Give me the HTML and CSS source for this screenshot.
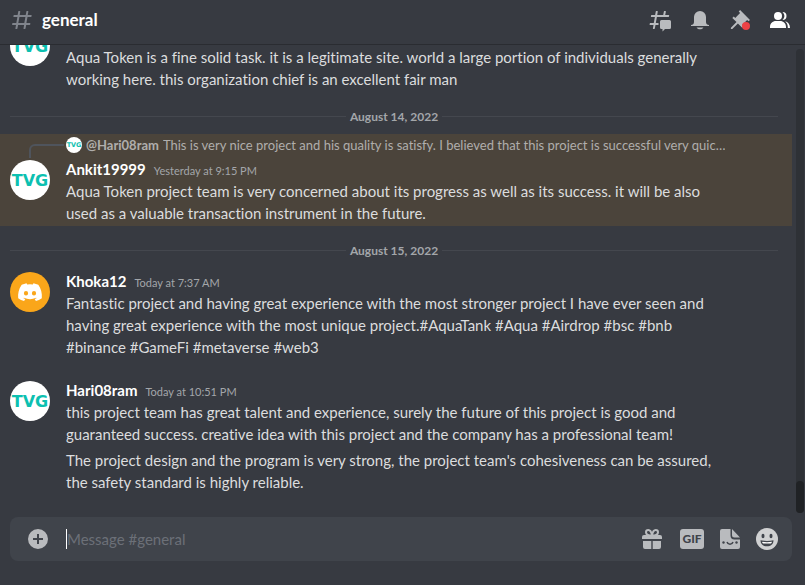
FILE: index.html
```html
<!DOCTYPE html>
<html lang="en">
<head>
<meta charset="UTF-8">
<meta name="viewport" content="width=device-width, initial-scale=1.0">
<link rel="stylesheet" href="styles.css">
<title>general</title>
</head>
<body>

<svg class="sprite" aria-hidden="true">
<symbol id="tvg" viewBox="0 0 40 40">
<circle cx="20" cy="20" r="20" fill="#fff"/>
<text class="tvgText" x="20" y="26" text-anchor="middle">TVG</text>
</symbol>
</svg>

<header class="topBar">
<svg class="icon hash" viewBox="0 0 24 24"><path fill="currentColor" d="M5.9 21c-.3 0-.5-.3-.5-.6L6 17H2.600c-.3 0-.5-.3-.5-.6l.2-1c0-.2.300-.4.500-.4h3.500l1.100-6H3.900c-.3 0-.5-.3-.5-.6l.2-1c0-.2.300-.4.500-.4h3.500l.7-3.600c0-.2.200-.4.500-.4h1c.3 0 .5.300.5.600L9.700 7h6l.7-3.600c0-.2.200-.4.500-.4h1c.3 0 .5.300.5.600L17.700 7h3.500c.3 0 .5.300.5.600l-.2 1c0 .2-.3.400-.5.400h-3.500l-1.100 6h3.500c.3 0 .5.300.5.600l-.2 1c0 .2-.3.400-.5.400h-3.500l-.7 3.600c0 .2-.2.400-.5.400h-1c-.3 0-.5-.3-.5-.6l.6-3.400h-6l-.7 3.600c0 .2-.2.400-.5.400zM9.400 9l-1.100 6h6l1.100-6z"/></svg>
<h1 class="channelName">general</h1>
<nav class="tools">
<button class="toolBtn" aria-label="Threads">
<svg class="icon" viewBox="0 0 24 24" fill="currentColor"><path d="M5.400 21c-.3 0-.5-.3-.5-.6L5.500 17H2.100c-.3 0-.5-.3-.5-.6l.2-1c0-.2.300-.4.500-.4h3.500l1.100-6H3.400c-.3 0-.5-.3-.5-.6l.2-1c0-.2.300-.4.500-.4h3.500l.7-3.600c0-.2.200-.4.500-.4h1c.3 0 .5.300.5.600L9.200 7h6l.7-3.600c0-.2.200-.4.500-.4h1c.3 0 .5.300.5.600L17.200 7h3.500c.3 0 .5.300.5.600l-.2 1c0 .2-.3.400-.5.400H8.900l-1.100 6h2.700v2H7.500l-.7 3.600c0 .2-.2.400-.5.400z"/><path d="M13.500 12h8a1.500 1.500 0 0 1 1.500 1.500v6a1.500 1.500 0 0 1-1.500 1.500h-4.500l-2.500 2.500V21h-1a1.500 1.500 0 0 1-1.500-1.500v-6a1.500 1.500 0 0 1 1.500-1.500z"/></svg>
</button>
<button class="toolBtn" aria-label="Notifications">
<svg class="icon" viewBox="0 0 24 24" fill="currentColor"><path d="M18 9v5c0 1.700 1.300 3 3 3v1H3v-1c1.700 0 3-1.300 3-3V9a6 6 0 0 1 12 0zM8.600 19.500h6.800c-.5 1-1.700 1.800-3.400 1.800s-2.900-.8-3.400-1.800z"/></svg>
</button>
<button class="toolBtn" aria-label="Pinned messages">
<svg class="icon" viewBox="0 0 24 24" fill="currentColor"><path d="M22 12l-9.900-9.900-1.400 1.400 1.400 1.400-4.900 5-1.400-1.400-1.500 1.400 4.200 4.200L2.900 19.700v1.400h1.400l5.600-5.600 4.300 4.200 1.400-1.400-1.400-1.400 4.900-5 1.400 1.400z"/><circle class="dot" cx="18" cy="18" r="4"/></svg>
</button>
<button class="toolBtn active" aria-label="Member list">
<svg class="icon" viewBox="0 0 24 24" fill="currentColor"><circle cx="10" cy="8" r="4"/><path d="M14.500 4a4 4 0 0 1 0 8c1.300-1.200 1.900-2.500 1.900-4s-.6-2.800-1.900-4zM2 20v-1c0-3.500 2.500-6 6-6h4c3.500 0 6 2.500 6 6v1zM17 13.200c3 .8 5 3 5 6.800h-2.200v-1c0-2.300-.9-4.300-2.800-5.800z"/></svg>
</button>
</nav>
</header>

<main class="chat">
<div class="messages">

<article class="message">
<svg class="avatar"><use href="#tvg"/></svg>
<div class="body">
<div class="meta"></div>
<p class="text">Aqua Token is a fine solid task. it is a legitimate site. world a large portion of individuals generally<br>working here. this organization chief is an excellent fair man</p>
</div>
</article>

<div class="divider">August 14, 2022</div>

<article class="message mentioned">
<div class="reply">
<svg class="miniAvatar"><use href="#tvg"/></svg>
<b class="replyUser">@Hari08ram</b>
<span class="replyText">This is very nice project and his quality is satisfy. I believed that this project is successful very quic…</span>
</div>
<svg class="avatar"><use href="#tvg"/></svg>
<div class="body">
<div class="meta"><b class="user">Ankit19999</b><time class="time">Yesterday at 9:15 PM</time></div>
<p class="text">Aqua Token project team is very concerned about its progress as well as its success. it will be also<br>used as a valuable transaction instrument in the future.</p>
</div>
</article>

<div class="divider">August 15, 2022</div>

<article class="message">
<svg class="avatar" viewBox="0 0 40 40"><circle cx="20" cy="20" r="20" fill="#faa61a"/><path fill="#fff" fill-rule="evenodd" d="M28.300 12.800A19 19 0 0 0 23.500 11.200l-.7 1.300a18 18 0 0 0-5.600 0l-.7-1.300a19 19 0 0 0-4.800 1.600C8.600 17.300 7.800 21.800 8.200 26.200a19 19 0 0 0 5.900 2.900l1.200-2-1.900-.9.500-.4a14 14 0 0 0 12.200 0l.5.400-1.900.9 1.200 2a19 19 0 0 0 5.900-2.900c.5-5.100-.8-9.500-3.500-13.400zM16 23.600a2.100 2.300 0 1 1 0-4.600 2.100 2.300 0 0 1 0 4.600zm8 0a2.100 2.300 0 1 1 0-4.600 2.100 2.300 0 0 1 0 4.600z"/></svg>
<div class="body">
<div class="meta"><b class="user">Khoka12</b><time class="time">Today at 7:37 AM</time></div>
<p class="text">Fantastic project and having great experience with the most stronger project I have ever seen and<br>having great experience with the most unique project.#AquaTank #Aqua #Airdrop #bsc #bnb<br>#binance #GameFi #metaverse #web3</p>
</div>
</article>

<article class="message spaced">
<svg class="avatar"><use href="#tvg"/></svg>
<div class="body">
<div class="meta"><b class="user">Hari08ram</b><time class="time">Today at 10:51 PM</time></div>
<p class="text">this project team has great talent and experience, surely the future of this project is good and<br>guaranteed success. creative idea with this project and the company has a professional team!</p>
</div>
</article>

<article class="message">
<div class="body">
<p class="text">The project design and the program is very strong, the project team's cohesiveness can be assured,<br>the safety standard is highly reliable.</p>
</div>
</article>

</div>
<div class="track"><div class="thumb"></div></div>
</main>

<form class="composer">
<button type="button" class="addBtn" aria-label="Add attachment">
<svg class="icon" viewBox="0 0 24 24"><path fill="currentColor" fill-rule="evenodd" d="M12 2a10 10 0 1 0 0 20 10 10 0 0 0 0-20zm5 11h-4v4h-2v-4H7v-2h4V7h2v4h4z"/></svg>
</button>
<input class="msgInput" type="text" aria-label="Message #general" placeholder="Message #general">
<button type="button" class="formBtn" aria-label="Send a gift">
<svg class="icon" viewBox="0 0 24 24"><path fill="currentColor" d="M3 14h8.300v8H5a2 2 0 0 1-2-2zM12.700 14H21v6a2 2 0 0 1-2 2h-6.300zM4 8h16a2 2 0 0 1 2 2v2H2v-2a2 2 0 0 1 2-2z"/><path fill="none" stroke="currentColor" stroke-width="2" d="M12 8.500C9.500 8.500 6 8 6 5.200 6 3.900 7 3 8.300 3 10.500 3 11.500 5.500 12 8.500c.5-3 1.500-5.500 3.700-5.500C17 3 18 3.900 18 5.200c0 2.800-3.500 3.300-6 3.300z"/></svg>
</button>
<button type="button" class="gifBtn">GIF</button>
<button type="button" class="formBtn" aria-label="Open sticker picker">
<svg class="icon" viewBox="0 0 24 24"><path fill="currentColor" d="M4 2h8.500v6.500a4 4 0 0 0 4 4H22V20a2 2 0 0 1-2 2H4a2 2 0 0 1-2-2V4a2 2 0 0 1 2-2zM14 2l8 8.500h-5.500A2.500 2.500 0 0 1 14 8z"/><g fill="#40444b"><circle cx="5.500" cy="15.500" r="1.200"/><circle cx="18.500" cy="15.500" r="1.200"/></g><path fill="none" stroke="#40444b" stroke-width="1.500" d="M9 15c.5 1.500 1.500 2.200 3 2.200s2.500-.7 3-2.200"/></svg>
</button>
<button type="button" class="formBtn emoji" aria-label="Select emoji">
<svg class="icon" viewBox="0 0 24 24"><circle cx="12" cy="12" r="11" fill="currentColor"/><g fill="#40444b"><ellipse cx="8" cy="9" rx="1.500" ry="2.200"/><ellipse cx="16" cy="9" rx="1.500" ry="2.200"/><path d="M5.500 13.300c4 .9 9 .9 13 0 0 4-2.800 6-6.500 6s-6.500-2-6.500-6z"/></g><path fill="#fff" d="M7 14.700c3 .6 7 .6 10 0-.2 1-.7 1.600-1.200 1.900H8.200c-.5-.3-1-.9-1.200-1.900z"/></svg>
</button>
</form>

</body>
</html>
```
FILE: styles.css
```css
*{
margin: 0;
padding: 0;
box-sizing: border-box;
}

body{
display: flex;
flex-direction: column;
height: 100vh;
background: #373a41;
color: #dcddde;
font: 15px/22px Lato, "Noto Sans", sans-serif;
font-variant-ligatures: none;
overflow: hidden;
}

button{
background: none;
border: none;
color: inherit;
font: inherit;
cursor: pointer;
}

.sprite{
position: absolute;
width: 0;
height: 0;
}

.tvgText{
font: bold 16px "DejaVu Sans", sans-serif;
fill: #0cc0b0;
}

.icon{
display: block;
width: 24px;
height: 24px;
}


.topBar{
display: flex;
align-items: center;
height: 45px;
flex-shrink: 0;
padding: 0 13px 5px 10px;
border-bottom: 1px solid #2a2c31;
}

.hash{
color: #80848c;
}

.channelName{
margin-left: 8px;
font-size: 17px;
line-height: 20px;
color: #fff;
}

.tools{
display: flex;
gap: 16px;
margin-left: auto;
color: #b9bbbe;
}

.active{
color: #fff;
}

.dot{
fill: #ed4245;
}


.chat{
display: flex;
flex: 1;
min-height: 0;
}

.messages{
display: flex;
flex-direction: column;
justify-content: flex-end;
flex: 1;
min-width: 0;
padding-bottom: 22px;
overflow: hidden;
}

.message{
display: grid;
grid-template-columns: 40px 1fr;
column-gap: 16px;
flex-shrink: 0;
padding: 2px 48px 2px 10px;
}

.spaced{
margin-top: 17px;
}

.mentioned{
background: #4b443b;
}

.avatar{
width: 40px;
height: 40px;
margin-top: 2px;
}

.body{
grid-column: 2;
min-width: 0;
}

.meta{
display: flex;
align-items: baseline;
gap: 8px;
height: 22px;
}

.user{
color: #fff;
}

.time{
font-size: 11px;
color: #a3a6aa;
}

.text{
white-space: nowrap;
}

.reply{
display: flex;
align-items: center;
grid-column: 2;
gap: 4px;
position: relative;
min-width: 0;
margin-bottom: 4px;
font-size: 13px;
line-height: 18px;
color: #b0aeac;
}

/* curved line from the avatar up to the quoted message */
.reply::before{
content: "";
position: absolute;
left: -37px;
top: 8px;
width: 33px;
height: 12px;
border: 2px solid #4f545c;
border-width: 2px 0 0 2px;
border-top-left-radius: 6px;
}

.miniAvatar{
width: 16px;
height: 16px;
flex-shrink: 0;
}

.replyText{
overflow: hidden;
white-space: nowrap;
text-overflow: ellipsis;
}

.divider{
display: flex;
align-items: center;
flex-shrink: 0;
gap: 4px;
height: 13px;
margin: 18px 14px 11px 10px;
font-size: 12px;
font-weight: bold;
line-height: 13px;
color: #a3a6aa;
}

.divider::before,
.divider::after{
content: "";
flex: 1;
height: 1px;
background: #44474e;
}

.track{
width: 8px;
margin: 4px 1px 4px 4px;
display: flex;
align-items: flex-end;
border-radius: 4px;
background: #2e3136;
}

.thumb{
width: 8px;
height: 32px;
border-radius: 4px;
background: #202225;
}


.composer{
display: flex;
align-items: center;
flex-shrink: 0;
height: 44px;
margin: 0 13px 24px 10px;
padding: 0 13px 0 16px;
border-radius: 8px;
background: #40444b;
color: #b9bbbe;
}

.msgInput{
flex: 1;
min-width: 0;
height: 20px;
margin: 0 12px 0 16px;
background: none;
border: none;
border-left: 1px solid #fff;
outline: none;
color: #dcddde;
font: inherit;
}

.msgInput::placeholder{
color: #6c7078;
opacity: 1;
}

.gifBtn{
width: 24px;
height: 20px;
margin: 0 14px 0 16px;
border-radius: 3px;
background: #b9bbbe;
color: #40444b;
font-size: 12px;
font-weight: 900;
line-height: 20px;
}

.emoji{
margin-left: 13px;
color: #d0d1d2;
}
```
